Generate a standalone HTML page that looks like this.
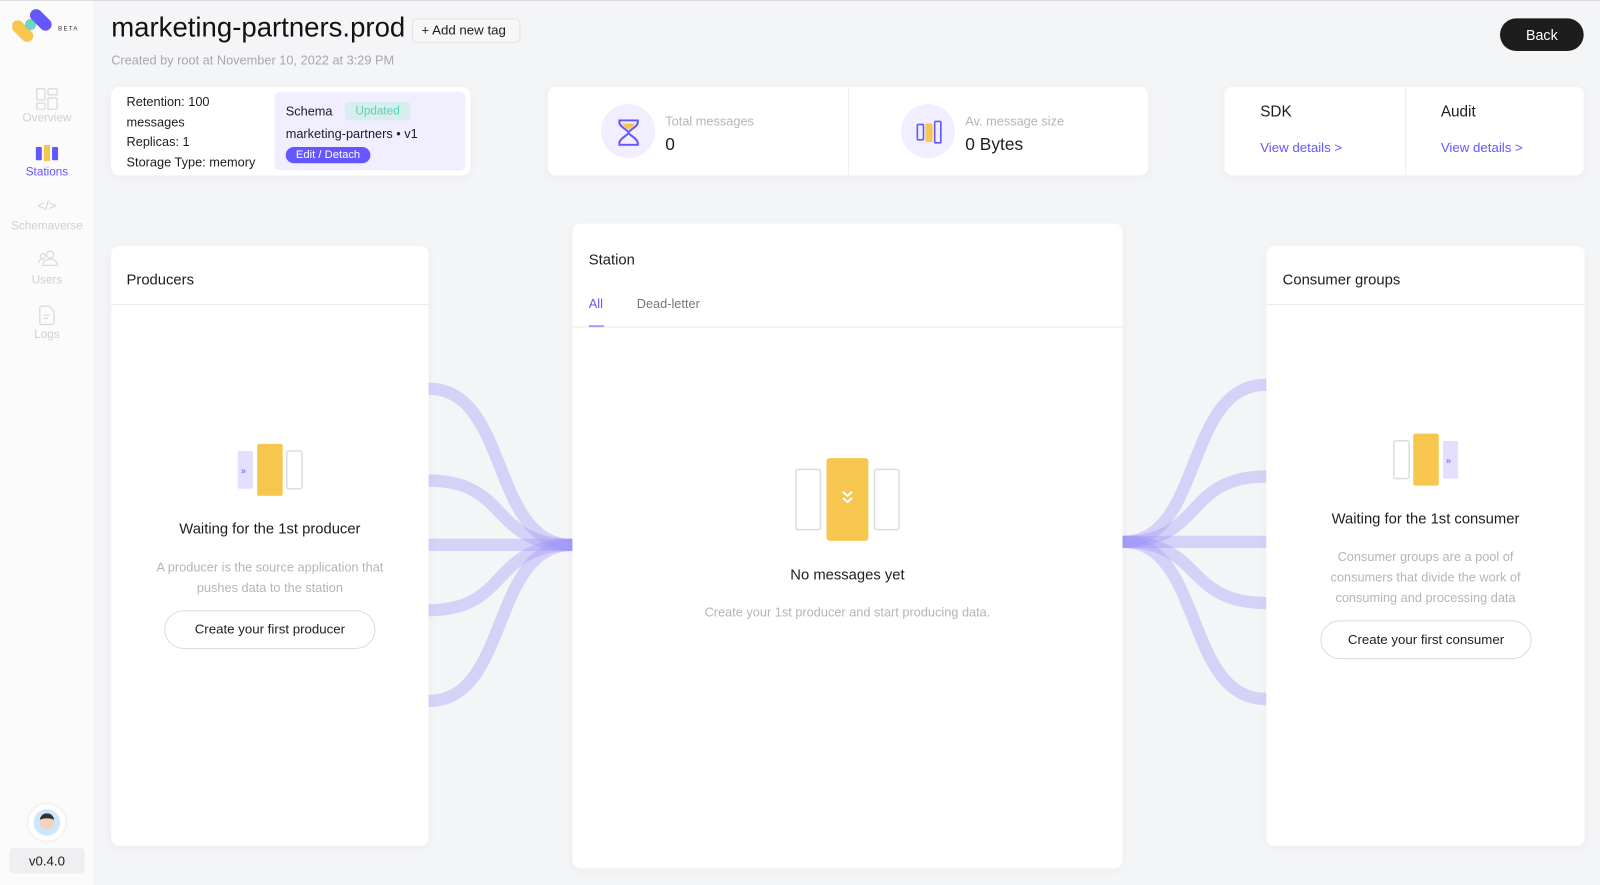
<!DOCTYPE html>
<html><head><meta charset="utf-8"><style>
*{margin:0;padding:0;box-sizing:border-box}
html,body{width:1600px;height:884px;overflow:hidden;background:#f4f5f7;font-family:"Liberation Sans",sans-serif;color:#1d1d1d}
#w{position:absolute;left:0;top:0;width:1568px;height:866px;transform:scale(1.020408);transform-origin:0 0;background:#f4f5f7;border-top:1px solid #dcdcdf}
.a{position:absolute}
.card{position:absolute;background:#fff;border-radius:8px;box-shadow:0 2px 10px rgba(0,0,0,0.04)}
.side{left:0;top:0;width:92px;height:866px;background:#fbfbfb}
.nav{position:absolute;width:92px;text-align:center;font-size:11.5px;color:#cfcfd4}
.t13{font-size:12.5px}
.gray{color:#a9a9ad}
.purple{color:#6557ff}
.btn{position:absolute;border:1px solid #dcdce0;border-radius:20px;background:#fff;font-size:13px;text-align:center}
</style></head><body><div id="w">
<div class="a side"></div>
<!-- logo -->
<svg class="a" style="left:12px;top:8px" width="70" height="34" viewBox="0 0 70 34">
<rect x="4" y="9" width="12" height="25" rx="6" transform="rotate(-45 10 21.5)" fill="#f7c64f"/>
<circle cx="18" cy="15" r="5.5" fill="#6fd7c1"/>
<rect x="22" y="-2" width="12" height="25" rx="6" transform="rotate(-45 28 10.5)" fill="#6557ff"/>
<text x="45" y="21" font-size="6" letter-spacing="1.2" fill="#333" font-family="Liberation Sans">BETA</text>
</svg>
<!-- nav -->
<svg class="a" style="left:35px;top:85px" width="22" height="22" viewBox="0 0 22 22" fill="none" stroke="#d8d8dc" stroke-width="1.2"><rect x="1" y="1" width="8" height="11" rx="1"/><rect x="12" y="1" width="9" height="6" rx="1"/><rect x="1" y="15" width="8" height="6" rx="1"/><rect x="12" y="10" width="9" height="11" rx="1"/></svg>
<div class="nav" style="top:109px">Overview</div>
<svg class="a" style="left:35px;top:141px" width="22" height="16"><rect x="0" y="2" width="6" height="13" rx="1" fill="#6557ff"/><rect x="8" y="0" width="6" height="16" rx="1" fill="#f7c64f"/><rect x="16" y="2" width="6" height="13" rx="1" fill="#6557ff"/></svg>
<div class="nav" style="top:162px;color:#6557ff">Stations</div>
<div class="nav" style="top:193px;font-size:13px;color:#cfcfd4">&lt;/&gt;</div>
<div class="nav" style="top:215px">Schemaverse</div>
<svg class="a" style="left:37px;top:244px" width="20" height="16" fill="none" stroke="#d8d8dc" stroke-width="1.1"><circle cx="12" cy="4.5" r="3.5"/><path d="M5 15c0-4 3-6 7-6s7 2 7 6z"/><circle cx="5" cy="6" r="2.5"/><path d="M1 13c0-2.5 1.5-4 4-4"/></svg>
<div class="nav" style="top:268px">Users</div>
<svg class="a" style="left:38px;top:298px" width="16" height="20" fill="none" stroke="#d8d8dc" stroke-width="1.2"><path d="M1 3a2 2 0 012-2h7l5 5v11a2 2 0 01-2 2H3a2 2 0 01-2-2z"/><path d="M5 10h6M5 13h4"/></svg>
<div class="nav" style="top:321px">Logs</div>
<div class="a" style="left:28px;top:787px;width:36px;height:36px;border-radius:50%;background:#fff;box-shadow:0 0 4px rgba(0,0,0,.1)"><div style="margin:5px;width:26px;height:26px;border-radius:50%;background:#cde6fb;position:relative"><div style="position:absolute;left:6px;top:4px;width:14px;height:16px;border-radius:7px;background:#f2d3bd;border-top:5px solid #333"></div></div></div>
<div class="a" style="left:9px;top:830px;width:74px;height:25px;background:#efeff1;border-radius:4px;font-size:13px;text-align:center;line-height:25px">v0.4.0</div>

<!-- header -->
<div class="a" style="left:109px;top:11px;font-size:27px;color:#111">marketing-partners.prod</div>
<div class="a" style="left:404px;top:17px;width:106px;height:24px;border:1px solid #e2e2e6;border-radius:4px;background:#f7f7f8;font-size:13px;line-height:22px;padding-left:8px">+ Add new tag</div>
<div class="a gray" style="left:109px;top:51px;font-size:12.5px">Created by root at November 10, 2022 at 3:29 PM</div>
<div class="a" style="left:1470px;top:17px;width:82px;height:32px;border-radius:16px;background:#1d1d1d;color:#fff;font-size:14px;text-align:center;line-height:32px">Back</div>

<!-- info card -->
<div class="card" style="left:109px;top:84px;width:352px;height:87px">
<div class="a t13" style="left:15px;top:6px;line-height:19.7px;width:145px">Retention: 100<br>messages<br>Replicas: 1<br>Storage Type: memory</div>
<div class="a" style="left:160px;top:5px;width:187px;height:77px;background:#f0eeff;border-radius:5px">
<div class="a t13" style="left:11px;top:12px">Schema</div>
<div class="a" style="left:69px;top:10px;width:64px;height:18px;background:#d6eeee;border-radius:3px;color:#5ecfb9;font-size:11.5px;text-align:center;line-height:18px">Updated</div>
<div class="a" style="left:11px;top:34px;font-size:12.5px">marketing-partners • v1</div>
<div class="a" style="left:11px;top:54px;width:83px;height:16px;background:#6557ff;border-radius:8px;color:#fff;font-size:11px;text-align:center;line-height:16px">Edit / Detach</div>
</div></div>

<!-- stats -->
<div class="card" style="left:537px;top:84px;width:588px;height:87px">
<div class="a" style="left:294px;top:0;width:1px;height:87px;background:#eee"></div>
<div class="a" style="left:52px;top:17px;width:53px;height:53px;border-radius:50%;background:#f0eeff"></div>
<svg class="a" style="left:67px;top:32px" width="24" height="26" fill="none" stroke="#6557ff" stroke-width="2"><path d="M6 4h12c-1 3-4 5-6 6-2-1-5-3-6-6z" fill="#f7c64f" stroke="none"/><path d="M3 1h18v2c0 4-9 8-9 10 0 2 9 6 9 10v2H3v-2c0-4 9-8 9-10 0-2-9-6-9-10z"/></svg>
<div class="a" style="left:115px;top:27px;font-size:12.5px;color:#b5b5b9">Total messages</div>
<div class="a" style="left:115px;top:47px;font-size:17px">0</div>
<div class="a" style="left:346px;top:17px;width:53px;height:53px;border-radius:50%;background:#f0eeff"></div>
<svg class="a" style="left:361px;top:33px" width="26" height="24"><rect x="1" y="4" width="6" height="15" rx="1" fill="none" stroke="#6557ff" stroke-width="1.6"/><rect x="9" y="3" width="7" height="18" rx="1" fill="#f7c64f"/><rect x="18" y="1" width="6" height="21" rx="1" fill="none" stroke="#6557ff" stroke-width="1.6"/></svg>
<div class="a" style="left:409px;top:27px;font-size:12.5px;color:#b5b5b9">Av. message size</div>
<div class="a" style="left:409px;top:47px;font-size:17px">0 Bytes</div>
</div>

<!-- sdk -->
<div class="card" style="left:1200px;top:84px;width:352px;height:87px">
<div class="a" style="left:177px;top:0;width:1px;height:87px;background:#eee"></div>
<div class="a" style="left:35px;top:16px;font-size:15px">SDK</div>
<div class="a purple" style="left:35px;top:52px;font-size:13px">View details &gt;</div>
<div class="a" style="left:212px;top:16px;font-size:15px">Audit</div>
<div class="a purple" style="left:212px;top:52px;font-size:13px">View details &gt;</div>
</div>

<!-- curves -->
<svg class="a" style="left:0;top:0" width="1568" height="866" fill="none" stroke="#9b93f5" stroke-opacity="0.35" stroke-width="12">
<path d="M420 380C500 380 480 533 561 533"/>
<path d="M420 470C500 470 480 533 561 533"/>
<path d="M420 533L561 533"/>
<path d="M420 597C500 597 480 533 561 533"/>
<path d="M420 686C500 686 480 533 561 533"/>
<path d="M1241 376C1160 376 1180 530 1100 530"/>
<path d="M1241 466C1160 466 1180 530 1100 530"/>
<path d="M1241 530L1100 530"/>
<path d="M1241 590C1160 590 1180 530 1100 530"/>
<path d="M1241 684C1160 684 1180 530 1100 530"/>
</svg>

<!-- producers -->
<div class="card" style="left:109px;top:240px;width:311px;height:588px">
<div class="a" style="left:15px;top:26px;font-size:14.5px">Producers</div>
<div class="a" style="left:0;top:57px;width:311px;height:1px;background:#eaeaea"></div>
<svg class="a" style="left:123px;top:193px" width="66" height="52"><rect x="1" y="8" width="15" height="37" rx="1" fill="#e3e0ff"/><text x="4" y="30" font-size="9" fill="#6557ff" font-family="Liberation Sans">»</text><rect x="20" y="1" width="25" height="51" rx="2" fill="#f7c64f"/><rect x="49" y="8" width="15" height="37" rx="2" fill="none" stroke="#ddd" stroke-width="1.5"/></svg>
<div class="a" style="left:0;width:311px;top:270px;text-align:center;font-size:14.5px">Waiting for the 1st producer</div>
<div class="a" style="left:0;width:311px;top:305px;text-align:center;font-size:12.5px;line-height:20px;color:#b5b5b9">A producer is the source application that<br>pushes data to the station</div>
<div class="btn" style="left:52px;top:357px;width:207px;height:38px;line-height:36px">Create your first producer</div>
</div>

<!-- station -->
<div class="card" style="left:561px;top:218px;width:539px;height:632px">
<div class="a" style="left:16px;top:28px;font-size:14.5px">Station</div>
<div class="a purple" style="left:16px;top:72px;font-size:12.5px">All</div>
<div class="a" style="left:63px;top:72px;font-size:12.5px;color:#777">Dead-letter</div>
<div class="a" style="left:16px;top:100px;width:15px;height:2px;background:#6557ff"></div>
<div class="a" style="left:0;top:101px;width:539px;height:1px;background:#eaeaea"></div>
<svg class="a" style="left:218px;top:229px" width="104" height="83"><rect x="1" y="12" width="24" height="59" rx="2" fill="none" stroke="#ddd" stroke-width="1.5"/><rect x="31" y="1" width="41" height="81" rx="3" fill="#f7c64f"/><path d="M47 34l4.5 4 4.5-4M47 40l4.5 4 4.5-4" stroke="#fff" stroke-width="2" fill="none"/><rect x="78" y="12" width="24" height="59" rx="2" fill="none" stroke="#ddd" stroke-width="1.5"/></svg>
<div class="a" style="left:0;width:539px;top:337px;text-align:center;font-size:14.5px">No messages yet</div>
<div class="a" style="left:0;width:539px;top:374px;text-align:center;font-size:12.5px;color:#b5b5b9">Create your 1st producer and start producing data.</div>
</div>

<!-- consumers -->
<div class="card" style="left:1241px;top:240px;width:312px;height:588px">
<div class="a" style="left:16px;top:26px;font-size:14.5px">Consumer groups</div>
<div class="a" style="left:0;top:57px;width:312px;height:1px;background:#eaeaea"></div>
<svg class="a" style="left:124px;top:183px" width="66" height="52"><rect x="1" y="8" width="15" height="37" rx="2" fill="none" stroke="#ddd" stroke-width="1.5"/><rect x="20" y="1" width="25" height="51" rx="2" fill="#f7c64f"/><rect x="49" y="8" width="15" height="37" rx="1" fill="#e3e0ff"/><text x="52" y="30" font-size="9" fill="#6557ff" font-family="Liberation Sans">»</text></svg>
<div class="a" style="left:0;width:312px;top:260px;text-align:center;font-size:14.5px">Waiting for the 1st consumer</div>
<div class="a" style="left:0;width:312px;top:295px;text-align:center;font-size:12.5px;line-height:20px;color:#b5b5b9">Consumer groups are a pool of<br>consumers that divide the work of<br>consuming and processing data</div>
<div class="btn" style="left:53px;top:367px;width:207px;height:38px;line-height:36px">Create your first consumer</div>
</div>
</div></body></html>
